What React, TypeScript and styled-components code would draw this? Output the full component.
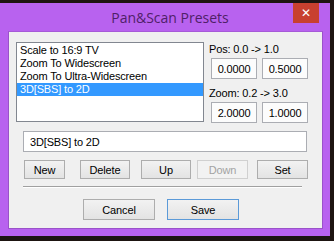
import React from "react";
import styled, { createGlobalStyle } from "styled-components";

const Global = createGlobalStyle`
  html, body { margin: 0; padding: 0; }
  body {
    background: #1d1411;
    width: 334px;
    height: 241px;
    overflow: hidden;
    font-family: "Liberation Sans", Arial, sans-serif;
  }
`;

const Page = styled.div`
  padding-top: 3px;
  height: 241px;
  box-sizing: border-box;
`;

const Window = styled.div`
  width: 330px;
  height: 233px;
  box-sizing: border-box;
  background: #b862ef;
  display: flex;
  flex-direction: column;
  padding: 0 7px 7px 8px;
`;

const TitleBar = styled.div`
  height: 28px;
  display: grid;
  grid-template-columns: 1fr auto 1fr;
  align-items: start;
  margin-right: -7px;
`;

const Title = styled.div`
  grid-column: 2;
  font-family: "Open Sans", "Noto Sans", sans-serif;
  font-size: 14px;
  line-height: 29px;
  color: #4f1f68;
  padding-left: 2px;
`;

const CloseButton = styled.div`
  grid-column: 3;
  justify-self: end;
  margin-right: 11px;
  width: 26px;
  height: 20px;
  background: #c8402f;
  color: #fff;
  display: flex;
  align-items: center;
  justify-content: center;
  font-family: "DejaVu Sans", sans-serif;
  font-size: 12px;
`;

const Client = styled.div`
  flex: 1;
  background: #f0f0f0;
  border: 1px solid #9a52c9;
  border-top-color: #a65ad8;
  display: flex;
  flex-direction: column;
  font-size: 11px;
  letter-spacing: -0.15px;
  color: #000;
`;

const TopRow = styled.div`
  display: flex;
  padding: 10px 0 0 7px;
  gap: 5px;
`;

const ListBox = styled.div`
  width: 188px;
  height: 80px;
  box-sizing: border-box;
  background: #fff;
  border: 1px solid #828790;
  padding-top: 1px;
  display: flex;
  flex-direction: column;
`;

const ListItem = styled.div<{ $selected?: boolean }>`
  height: 13px;
  line-height: 13px;
  padding-left: 3px;
  white-space: nowrap;
  background: ${(p) => (p.$selected ? "#3399ff" : "transparent")};
  color: ${(p) => (p.$selected ? "#fff" : "#000")};
`;

const RightPanel = styled.div`
  display: flex;
  flex-direction: column;
`;

const RangeLabel = styled.div<{ $top: number }>`
  margin-top: ${(p) => p.$top}px;
  height: 13px;
  line-height: 13px;
  white-space: nowrap;
`;

const FieldPair = styled.div`
  display: flex;
  gap: 5px;
  margin-left: 2px;
  margin-top: 2px;
`;

const NumberBox = styled.div`
  width: 46px;
  height: 21px;
  box-sizing: border-box;
  border: 1px solid #abadb3;
  background: #fcfcfc;
  display: flex;
  align-items: center;
  justify-content: center;
`;

const NameBox = styled.div`
  margin: 8px 0 0 14px;
  width: 284px;
  height: 21px;
  box-sizing: border-box;
  border: 1px solid #abadb3;
  background: #fff;
  display: flex;
  align-items: center;
  padding-left: 6px;
`;

const ButtonRow = styled.div`
  display: flex;
  margin: 8px 0 0 15px;
`;

const Button = styled.div<{ $w: number; $gap?: number; $disabled?: boolean; $default?: boolean }>`
  width: ${(p) => p.$w}px;
  height: 19px;
  box-sizing: border-box;
  margin-left: ${(p) => p.$gap ?? 0}px;
  border: 1px solid
    ${(p) => (p.$default ? "#5b9ad8" : p.$disabled ? "#d0d0d0" : "#adadad")};
  background: ${(p) =>
    p.$disabled ? "#f2f2f2" : "linear-gradient(#f2f2f2, #e3e3e3)"};
  color: ${(p) => (p.$disabled ? "#a3a3a3" : "#000")};
  display: flex;
  align-items: center;
  justify-content: center;
`;

const Separator = styled.div`
  margin: 7px 0 0 14px;
  width: 279px;
  height: 1px;
  background: #a0a0a0;
  border-bottom: 1px solid #fff;
`;

const BottomRow = styled.div`
  display: flex;
  margin: 11px 0 0 74px;
  gap: 12px;
`;

const BigButton = styled(Button)`
  height: 21px;
`;

const presets = [
  "Scale to 16:9 TV",
  "Zoom To Widescreen",
  "Zoom To Ultra-Widescreen",
  "3D[SBS] to 2D",
];

export default function App() {
  return (
    <Page>
      <Global />
      <Window>
        <TitleBar>
          <Title>Pan&amp;Scan Presets</Title>
          <CloseButton>✕</CloseButton>
        </TitleBar>
        <Client>
          <TopRow>
            <ListBox>
              {presets.map((p, i) => (
                <ListItem key={p} $selected={i === 3}>
                  {p}
                </ListItem>
              ))}
            </ListBox>
            <RightPanel>
              <RangeLabel $top={1}>Pos: 0.0 -&gt; 1.0</RangeLabel>
              <FieldPair>
                <NumberBox>0.0000</NumberBox>
                <NumberBox>0.5000</NumberBox>
              </FieldPair>
              <RangeLabel $top={8}>Zoom: 0.2 -&gt; 3.0</RangeLabel>
              <FieldPair>
                <NumberBox>2.0000</NumberBox>
                <NumberBox>1.0000</NumberBox>
              </FieldPair>
            </RightPanel>
          </TopRow>
          <NameBox>3D[SBS] to 2D</NameBox>
          <ButtonRow>
            <Button $w={41}>New</Button>
            <Button $w={50} $gap={15}>Delete</Button>
            <Button $w={50} $gap={11}>Up</Button>
            <Button $w={51} $gap={6} $disabled>Down</Button>
            <Button $w={51} $gap={9}>Set</Button>
          </ButtonRow>
          <Separator />
          <BottomRow>
            <BigButton $w={72}>Cancel</BigButton>
            <BigButton $w={72} $default>Save</BigButton>
          </BottomRow>
        </Client>
      </Window>
    </Page>
  );
}
